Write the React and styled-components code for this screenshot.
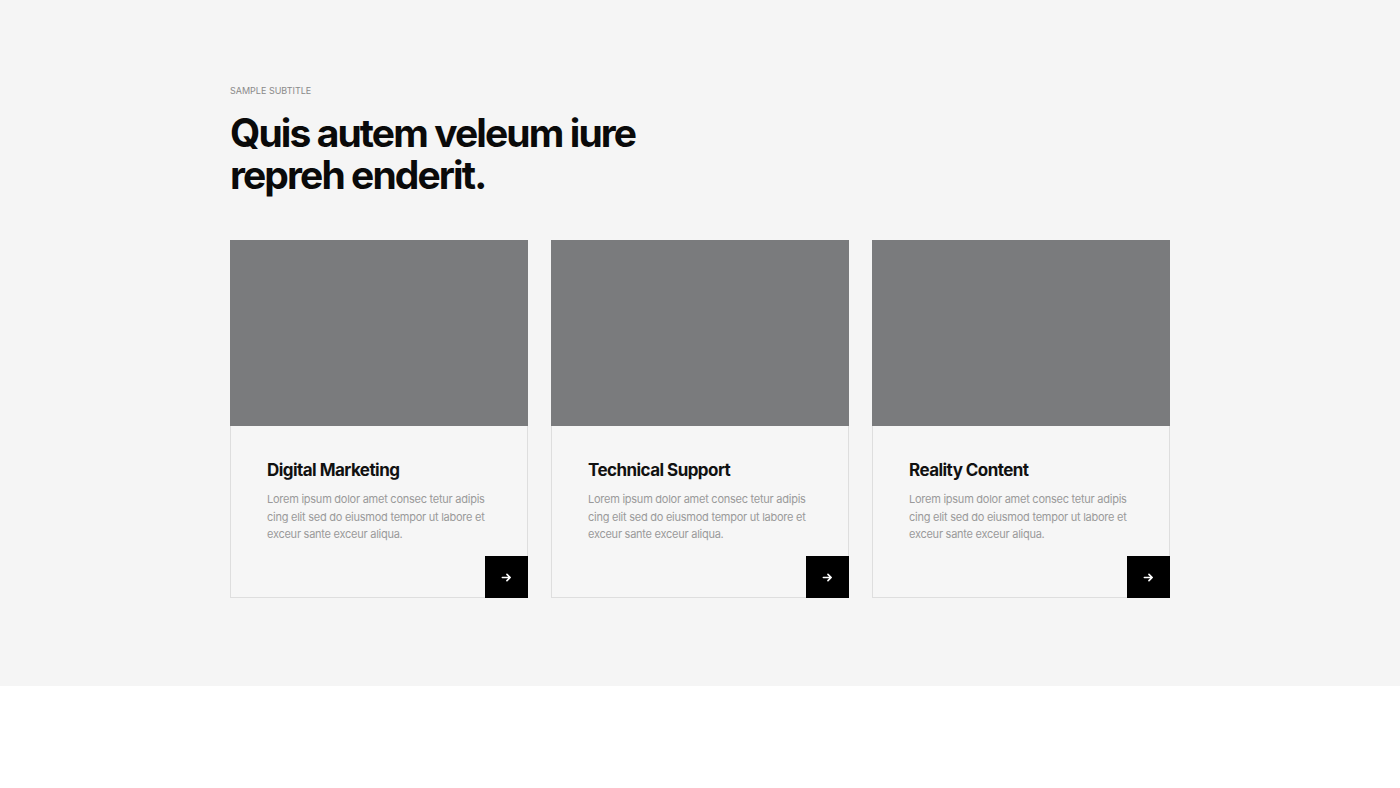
import styled, { createGlobalStyle } from 'styled-components';

const GlobalStyle = createGlobalStyle`
  html, body {
    margin: 0;
    padding: 0;
    background: #ffffff;
    font-family: Inter, 'Noto Sans', sans-serif;
  }
`;

const services = [
  { title: 'Digital Marketing' },
  { title: 'Technical Support' },
  { title: 'Reality Content' },
];

const text =
  'Lorem ipsum dolor amet consec tetur adipis cing elit sed do eiusmod tempor ut labore et exceur sante exceur aliqua.';

const ArrowIcon = () => (
  <svg width='11' height='11' viewBox='0 0 12 12' fill='none'>
    <path
      d='M1.5 6h8.5M6.5 2.5L10 6l-3.5 3.5'
      stroke='#fff'
      strokeWidth='1.8'
      strokeLinecap='round'
      strokeLinejoin='round'
    />
  </svg>
);

const App = () => {
  return (
    <>
      <GlobalStyle />
      <Section>
        <Inner>
          <Subtitle>Sample subtitle</Subtitle>
          <Heading>
            Quis autem veleum iure
            <br />
            repreh enderit.
          </Heading>
          <Grid>
            {services.map((s) => (
              <Card key={s.title}>
                <Thumb />
                <CardBody>
                  <CardTitle>{s.title}</CardTitle>
                  <CardText>{text}</CardText>
                </CardBody>
                <ArrowButton aria-label='more'>
                  <ArrowIcon />
                </ArrowButton>
              </Card>
            ))}
          </Grid>
        </Inner>
      </Section>
    </>
  );
};

export default App;

const Section = styled.section`
  background: #f5f5f5;
  height: 686px;
  box-sizing: border-box;
  padding-top: 84px;
`;

const Inner = styled.div`
  width: 940px;
  margin: 0 auto;
`;

const Subtitle = styled.div`
  font-size: 9px;
  text-transform: uppercase;
  color: #8a8a8a;
  letter-spacing: 0;
  line-height: 14px;
`;

const Heading = styled.h1`
  margin: 14px 0 0;
  font-size: 39px;
  font-weight: 700;
  line-height: 42px;
  letter-spacing: -1.9px;
  color: #0a0a0a;
`;

const Grid = styled.div`
  display: grid;
  grid-template-columns: repeat(3, 1fr);
  gap: 23px;
  margin-top: 44px;
`;

const Card = styled.div`
  position: relative;
  border: 1px solid #dedede;
  background: #f6f6f6;
  height: 358px;
  box-sizing: border-box;
  display: flex;
  flex-direction: column;
`;

const Thumb = styled.div`
  background: #7a7b7d;
  height: 186px;
  margin: -1px -1px 0;
`;

const CardBody = styled.div`
  padding: 33px 28px 0 36px;
`;

const CardTitle = styled.h3`
  margin: 0;
  font-size: 17px;
  font-weight: 700;
  letter-spacing: -0.55px;
  color: #111;
  line-height: 22px;
`;

const CardText = styled.p`
  margin: 10px 0 0;
  font-size: 11px;
  line-height: 17.5px;
  letter-spacing: -0.25px;
  color: #9a9a9a;
`;

const ArrowButton = styled.button`
  position: absolute;
  right: -1px;
  bottom: -1px;
  width: 43px;
  height: 42px;
  border: none;
  background: #000;
  display: flex;
  align-items: center;
  justify-content: center;
  cursor: pointer;
  padding: 0;
`;
